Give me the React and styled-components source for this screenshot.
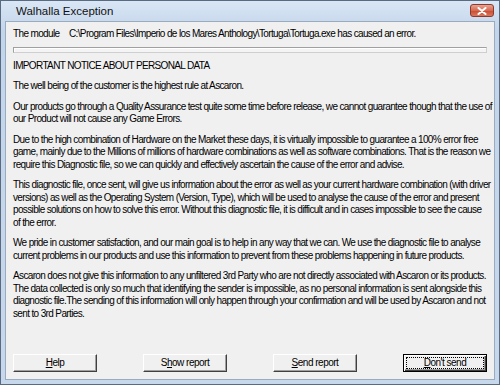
import React from "react";
import styled, { createGlobalStyle } from "styled-components";

const Global = createGlobalStyle`
  html, body { margin: 0; padding: 0; background: #fff; }
  #root { width: 500px; height: 385px; }
`;

const Window = styled.div`
  width: 500px;
  height: 385px;
  box-sizing: border-box;
  border: 1px solid #5a6a80;
  background: linear-gradient(#d9e6f5, #c3d5ea 30px, #c7d8ec);
  display: flex;
  flex-direction: column;
  padding: 0 4px 4px;
  font-family: "Liberation Sans", Arial, sans-serif;
`;

const TitleBar = styled.div`
  position: relative;
  height: 20px;
  flex: none;
  display: flex;
  align-items: center;
  padding-left: 11px;
  font-size: 11.5px;
  color: #111;
`;

const CloseBtn = styled.div`
  position: absolute;
  right: 1px;
  top: 3px;
  width: 24px;
  height: 13px;
  box-sizing: border-box;
  border: 1px solid #8a3b2c;
  border-radius: 3px;
  background: linear-gradient(#e8a493, #d66a52 50%, #c94a30 51%, #d9785f);
  display: flex;
  align-items: center;
  justify-content: center;
`;

const Client = styled.div`
  flex: 1;
  background: #f0f0f0;
  border: 1px solid #9aabc0;
  display: flex;
  flex-direction: column;
  padding: 6px 7px 0;
  font-size: 10px;
  letter-spacing: -0.64px;
  color: #000;
  line-height: 12.5px;
`;

const ModuleRow = styled.div`
  display: flex;
  white-space: nowrap;
`;

const Label = styled.span`
  width: 56px;
  flex: none;
`;

const Groove = styled.div`
  margin-top: 6px;
  height: 6px;
  box-sizing: border-box;
  border: 1px solid #a0a0a0;
  border-right-color: #cfcfcf;
  border-bottom-color: #cfcfcf;
  background: #f4f4f4;
  box-shadow: inset 1px 1px 0 #fff;
`;

const Notice = styled.div`
  margin-top: 7px;
  display: flex;
  flex-direction: column;
  gap: 8px;
`;

const Para = styled.p`
  margin: 0;
  white-space: nowrap;
`;

const ButtonRow = styled.div`
  margin-top: auto;
  margin-bottom: 7px;
  display: flex;
  gap: 46px;
`;

const Button = styled.button`
  width: 84px;
  height: 18px;
  box-sizing: border-box;
  padding: 0;
  font: inherit;
  letter-spacing: -0.5px;
  font-size: 10px;
  color: #000;
  background: #f0f0f0;
  border: 1px solid;
  border-color: #fff #404040 #404040 #fff;
  box-shadow: inset -1px -1px 0 #a0a0a0;
  display: flex;
  align-items: center;
  justify-content: center;
  ${(p) =>
    p.$default &&
    `
    border: 1px solid #000;
    box-shadow: inset 1px 1px 0 #fff, inset -1px -1px 0 #404040, inset -2px -2px 0 #a0a0a0;
    outline: 1px dotted #000;
    outline-offset: -4px;
  `}
`;

const U = styled.span`
  text-decoration: underline;
`;

export default function App() {
  return (
    <>
      <Global />
      <Window>
        <TitleBar>
          Walhalla Exception
          <CloseBtn>
            <svg width="10" height="8" viewBox="0 0 10 8">
              <path d="M1.5 1 L8.5 7 M8.5 1 L1.5 7" stroke="#fff" strokeWidth="2" strokeLinecap="round" />
            </svg>
          </CloseBtn>
        </TitleBar>
        <Client>
          <ModuleRow>
            <Label>The module</Label>
            <span>C:\Program Files\Imperio de los Mares Anthology\Tortuga\Tortuga.exe has caused an error.</span>
          </ModuleRow>
          <Groove />
          <Notice>
            <Para>IMPORTANT NOTICE ABOUT PERSONAL DATA</Para>
            <Para>The well being of the customer is the highest rule at Ascaron.</Para>
            <Para>
              Our products go through a Quality Assurance test quite some time before release, we cannot guarantee though that the use of
              <br />
              our Product will not cause any Game Errors.
            </Para>
            <Para>
              Due to the high combination of Hardware on the Market these days, it is virtually impossible to guarantee a 100% error free
              <br />
              game, mainly due to the Millions of millions of hardware combinations as well as software combinations. That is the reason we
              <br />
              require this Diagnostic file, so we can quickly and effectively ascertain the cause of the error and advise.
            </Para>
            <Para>
              This diagnostic file, once sent, will give us information about the error as well as your current hardware combination (with driver
              <br />
              versions) as well as the Operating System (Version, Type), which will be used to analyse the cause of the error and present
              <br />
              possible solutions on how to solve this error. Without this diagnostic file, it is difficult and in cases impossible to see the cause
              <br />
              of the error.
            </Para>
            <Para>
              We pride in customer satisfaction, and our main goal is to help in any way that we can. We use the diagnostic file to analyse
              <br />
              current problems in our products and use this information to prevent from these problems happening in future products.
            </Para>
            <Para>
              Ascaron does not give this information to any unfiltered 3rd Party who are not directly associated with Ascaron or its products.
              <br />
              The data collected is only so much that identifying the sender is impossible, as no personal information is sent alongside this
              <br />
              diagnostic file.The sending of this information will only happen through your confirmation and will be used by Ascaron and not
              <br />
              sent to 3rd Parties.
            </Para>
          </Notice>
          <ButtonRow>
            <Button>
              <U>H</U>elp
            </Button>
            <Button>
              S<U>h</U>ow report
            </Button>
            <Button>
              <U>S</U>end report
            </Button>
            <Button $default>
              <U>D</U>on't send
            </Button>
          </ButtonRow>
        </Client>
      </Window>
    </>
  );
}
